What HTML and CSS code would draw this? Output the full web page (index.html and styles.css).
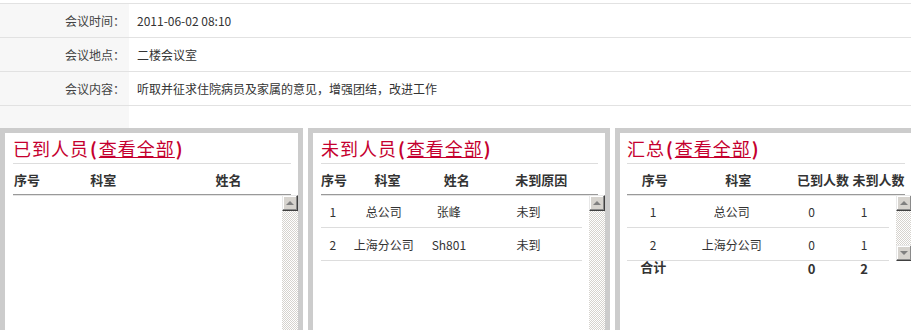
FILE: index.html
```html
<!DOCTYPE html>
<html lang="zh-CN">
<head>
<meta charset="utf-8">
<title>会议详情</title>
<link rel="stylesheet" href="styles.css">
</head>
<body>
<div class="info">
  <div class="info-row"><div class="lbl">会议时间：</div><div class="val">2011-06-02 08:10</div></div>
  <div class="info-row"><div class="lbl">会议地点：</div><div class="val">二楼会议室</div></div>
  <div class="info-row"><div class="lbl">会议内容：</div><div class="val">听取并征求住院病员及家属的意见，增强团结，改进工作</div></div>
  <div class="info-row last"><div class="lbl"></div><div class="val"></div></div>
</div>

<div class="panels">
  <section class="panel p1">
    <h2 class="title">已到人员<span class="paren">(</span><a href="#">查看全部</a><span class="paren">)</span></h2>
    <table class="grid head">
      <colgroup><col class="w10"><col class="w45"><col class="w45"></colgroup>
      <tr><th>序号</th><th>科室</th><th>姓名</th></tr>
    </table>
    <div class="scroll tall">
      <div class="rows">
        <table class="grid data">
          <colgroup><col class="w10"><col class="w45"><col class="w45"></colgroup>
        </table>
      </div>
      <div class="sb"><span class="btn up"></span><span class="track"></span></div>
    </div>
  </section>

  <section class="panel p2">
    <h2 class="title">未到人员<span class="paren">(</span><a href="#">查看全部</a><span class="paren">)</span></h2>
    <table class="grid head">
      <colgroup><col class="w9"><col class="w30"><col class="w20"><col class="w41"></colgroup>
      <tr><th>序号</th><th>科室</th><th>姓名</th><th>未到原因</th></tr>
    </table>
    <div class="scroll tall">
      <div class="rows">
        <table class="grid data">
          <colgroup><col class="w9"><col class="w30"><col class="w20"><col class="w41"></colgroup>
          <tr><td>1</td><td>总公司</td><td>张峰</td><td>未到</td></tr>
          <tr><td>2</td><td>上海分公司</td><td>Sh801</td><td>未到</td></tr>
        </table>
      </div>
      <div class="sb"><span class="btn up"></span><span class="track"></span></div>
    </div>
  </section>

  <section class="panel p3">
    <h2 class="title">汇总<span class="paren">(</span><a href="#">查看全部</a><span class="paren">)</span></h2>
    <table class="grid head">
      <colgroup><col class="w20"><col class="w40"><col class="w21"><col class="w19"></colgroup>
      <tr><th>序号</th><th>科室</th><th>已到人数</th><th>未到人数</th></tr>
    </table>
    <div class="scroll short">
      <div class="rows">
        <table class="grid data">
          <colgroup><col class="w20"><col class="w40"><col class="w21"><col class="w19"></colgroup>
          <tr><td>1</td><td>总公司</td><td>0</td><td>1</td></tr>
          <tr><td>2</td><td>上海分公司</td><td>0</td><td>1</td></tr>
        </table>
      </div>
      <div class="sb"><span class="btn up"></span><span class="track"></span><span class="btn down"></span></div>
    </div>
    <table class="grid total">
      <colgroup><col class="w20"><col class="w40"><col class="w21"><col class="w19"></colgroup>
      <tr><td>合计</td><td></td><td class="num">0</td><td class="num">2</td></tr>
    </table>
  </section>
</div>
</body>
</html>
```

FILE: styles.css
```css
html, body {
  margin: 0;
  padding: 0;
  overflow: hidden;
  background: #fff;
}

body {
  width: 911px;
  font-family: "Noto Sans CJK SC", "Liberation Sans", sans-serif;
  font-size: 12px;
  color: #333;
}

/* ---------- meeting info ---------- */
.info {
  margin-top: 3px;
  border-top: 1px solid #e2e2e2;
}

.info-row {
  display: flex;
  height: 33px;
  border-bottom: 1px solid #e2e2e2;
}

.info-row.last {
  height: 22px;
  border-bottom: 0;
}

.lbl {
  flex: 0 0 129px;
  box-sizing: border-box;
  padding-right: 4px;
  background: #f7f7f7;
  text-align: right;
  line-height: 33px;
  color: #444;
}

.val {
  flex: 1;
  padding-left: 8px;
  line-height: 33px;
  color: #333;
}

/* ---------- panels ---------- */
.panels {
  display: flex;
  gap: 5px;
  width: 911px;
  overflow: hidden;
}

.panel {
  flex: 0 0 auto;
  box-sizing: border-box;
  border: 5px solid #cccccc;
  padding-left: 8px;
  height: 260px;
}

.p1 { width: 303px; }
.p2 { width: 302px; }
.p3 { width: 302px; padding-left: 7px; }

.title {
  margin: 0 7px 0 0;
  height: 30px;
  line-height: 30px;
  border-bottom: 1px solid #dddddd;
  font-size: 18px;
  font-weight: normal;
  letter-spacing: 1px;
  color: #c5002f;
  white-space: nowrap;
}

.title .paren {
  font-weight: bold;
  padding: 0 1px;
}

.title a {
  color: #c5002f;
  text-decoration: underline;
}

.grid {
  border-collapse: collapse;
  table-layout: fixed;
}

.grid th,
.grid td {
  padding: 0;
  text-align: center;
  white-space: nowrap;
}

.head {
  width: calc(100% - 7px);
  margin-right: 7px;
  border-bottom: 1px solid #999999;
  box-shadow: 0 1px 0 #e4e4e4;
}

.head th {
  height: 30px;
  font-size: 13px;
  font-weight: bold;
  color: #333;
}

.w9 { width: 9%; }
.w10 { width: 10%; }
.w19 { width: 19%; }
.w20 { width: 20%; }
.w21 { width: 21%; }
.w30 { width: 30%; }
.w40 { width: 40%; }
.w41 { width: 41%; }
.w45 { width: 45%; }

.scroll {
  display: flex;
}

.scroll.tall { height: 200px; }
.scroll.short { height: 66px; }

.rows {
  flex: 1;
  min-width: 0;
}

.data {
  width: calc(100% - 7px);
}

.data td {
  height: 32px;
  border-bottom: 1px solid #dddddd;
  color: #333;
}

.total {
  width: calc(100% - 23px);
}

.total td {
  height: 15px;
  line-height: 12px;
  vertical-align: top;
  font-size: 13px;
  font-weight: bold;
  color: #333;
}

.total td.num {
  padding-top: 2px;
}

/* ---------- classic scrollbar ---------- */
.sb {
  flex: 0 0 16px;
  display: flex;
  flex-direction: column;
}

.btn {
  position: relative;
  flex: 0 0 16px;
  box-sizing: border-box;
  background: #d6d3ce;
  border: 1px solid;
  border-color: #e8e8e8 #404040 #404040 #e8e8e8;
  box-shadow: inset -1px -1px 0 #8a8a8a, inset 1px 1px 0 #ffffff;
}

.btn::after {
  content: "";
  position: absolute;
  left: 3px;
  width: 0;
  height: 0;
  border-left: 4px solid transparent;
  border-right: 4px solid transparent;
}

.btn.up::after {
  top: 5px;
  border-bottom: 4px solid #808080;
}

.btn.down::after {
  top: 5px;
  border-top: 4px solid #808080;
}

.track {
  flex: 1;
  background: repeating-conic-gradient(#d6d3ce 0 25%, #ffffff 0 50%) 0 0 / 2px 2px;
}
```
